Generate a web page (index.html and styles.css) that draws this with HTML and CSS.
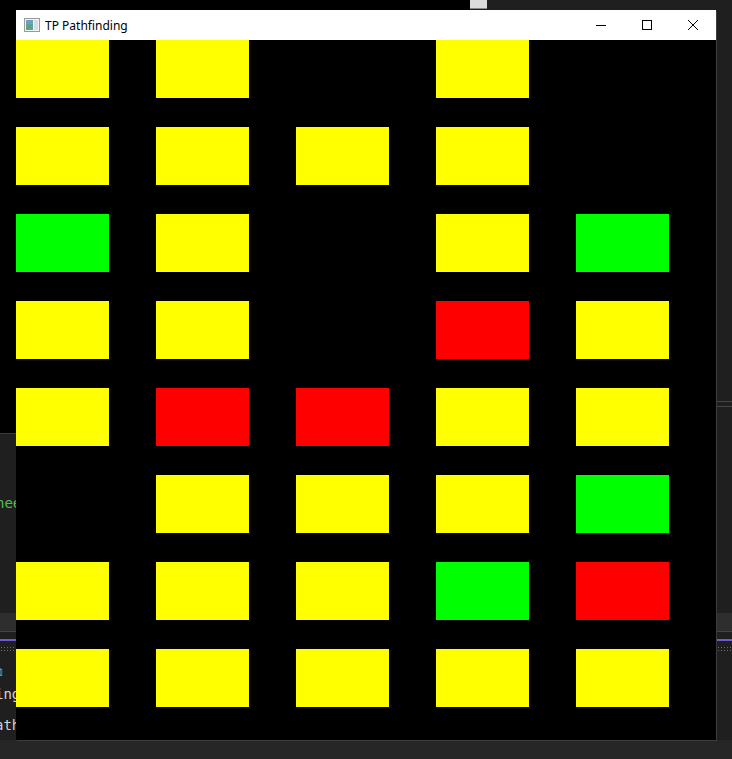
FILE: index.html
```html
<!DOCTYPE html>
<html>
<head>
<meta charset="utf-8">
<title>TP Pathfinding</title>
<link rel="stylesheet" href="styles.css">
</head>
<body>
<div class="desktop">
  <div class="bg-black"></div>
  <div class="thumb"></div>
  <div class="rline r1"></div>
  <div class="rline r2"></div>
  <div class="band"></div>
  <div class="purple"></div>
  <div class="dots"></div>
  <div class="bottom"></div>
  <span class="frag green">nee</span>
  <span class="frag ico">⧉</span>
  <span class="frag t1">ing</span>
  <span class="frag t2">ath</span>

  <div class="window">
    <div class="titlebar">
      <svg class="appicon" width="16" height="16" viewBox="0 0 16 16">
        <rect x="0.5" y="1.5" width="15" height="13" fill="#f4f4f4" stroke="#9a9a9a"/>
        <rect x="2" y="3" width="7" height="10" fill="#5aa58a"/>
        <rect x="2" y="3" width="7" height="4" fill="#6d9fc7"/>
        <rect x="10" y="3" width="4" height="10" fill="#d8dde2"/>
      </svg>
      <span class="title">TP Pathfinding</span>
      <div class="caption">
        <div class="cbtn"><svg width="10" height="10" viewBox="0 0 10 10"><line x1="0" y1="5.5" x2="10" y2="5.5" stroke="#000" stroke-width="1"/></svg></div>
        <div class="cbtn"><svg width="10" height="10" viewBox="0 0 10 10"><rect x="0.5" y="0.5" width="9" height="9" fill="none" stroke="#000" stroke-width="1"/></svg></div>
        <div class="cbtn"><svg width="10" height="10" viewBox="0 0 10 10"><path d="M0 0 L10 10 M10 0 L0 10" stroke="#000" stroke-width="1"/></svg></div>
      </div>
    </div>
    <div class="client">
      <div class="grid">
        <span class="c y"></span><span class="c y"></span><span class="c"></span><span class="c y"></span><span class="c"></span>
        <span class="c y"></span><span class="c y"></span><span class="c y"></span><span class="c y"></span><span class="c"></span>
        <span class="c g"></span><span class="c y"></span><span class="c"></span><span class="c y"></span><span class="c g"></span>
        <span class="c y"></span><span class="c y"></span><span class="c"></span><span class="c r"></span><span class="c y"></span>
        <span class="c y"></span><span class="c r"></span><span class="c r"></span><span class="c y"></span><span class="c y"></span>
        <span class="c"></span><span class="c y"></span><span class="c y"></span><span class="c y"></span><span class="c g"></span>
        <span class="c y"></span><span class="c y"></span><span class="c y"></span><span class="c g"></span><span class="c r"></span>
        <span class="c y"></span><span class="c y"></span><span class="c y"></span><span class="c y"></span><span class="c y"></span>
      </div>
    </div>
  </div>
</div>
</body>
</html>
```

FILE: styles.css
```css
html, body {
  margin: 0;
  padding: 0;
  background: #1e1e1e;
  overflow: hidden;
}
.desktop {
  position: relative;
  width: 732px;
  height: 759px;
  background: #1f1f1f;
  overflow: hidden;
  font-family: "DejaVu Sans Mono", monospace;
}
.bg-black {
  position: absolute;
  left: 0; top: 0;
  width: 470px; height: 433px;
  background: #000;
  border-bottom: 1px solid #3a3a3a;
}
.thumb {
  position: absolute;
  left: 470px; top: 0;
  width: 17px; height: 8px;
  background: #dcdcdc;
  border-bottom: 1px solid #8a8a8a;
}
.rline {
  position: absolute;
  left: 700px; width: 32px; height: 1px;
  background: #454545;
}
.r1 { top: 401px; }
.r2 { top: 406px; }
.band {
  position: absolute;
  left: 0; top: 613px;
  width: 732px; height: 18px;
  background: #2e2e2e;
  border-bottom: 1px solid #444;
}
.purple {
  position: absolute;
  left: 0; top: 639px;
  width: 732px; height: 2px;
  background: #6b5bd6;
}
.dots {
  position: absolute;
  left: 0; top: 646px;
  width: 732px; height: 5px;
  background-image: radial-gradient(circle, #6a6a6a 0.8px, transparent 1px);
  background-size: 3px 3px;
}
.bottom {
  position: absolute;
  left: 0; top: 685px;
  width: 732px; height: 74px;
  background: #1f1f1f;
}
.bottom::after {
  content: "";
  position: absolute;
  left: 0; top: 55px;
  width: 732px; height: 19px;
  background: #262626;
}
.frag {
  position: absolute;
  font-size: 14px;
  line-height: 16px;
  color: #d4d4d4;
}
.green { left: -4px; top: 495px; color: #4ec04e; }
.ico { left: -6px; top: 664px; color: #3b9cff; font-size: 12px; }
.t1 { left: -5px; top: 686px; }
.t2 { left: -5px; top: 717px; }

.window {
  position: absolute;
  left: 16px; top: 10px;
  width: 700px;
  height: 730px;
  background: #000;
  box-shadow: 1px 1px 0 #3c3c3c;
  display: flex;
  flex-direction: column;
}
.titlebar {
  height: 30px;
  flex: none;
  background: #fff;
  display: flex;
  align-items: center;
  font-family: "Noto Sans", "Open Sans", sans-serif;
}
.appicon {
  margin-left: 8px;
  margin-right: 5px;
  flex: none;
}
.title {
  font-size: 12px;
  color: #000;
  flex: 1;
  padding-top: 0px;
}
.caption {
  display: flex;
  height: 30px;
}
.cbtn {
  width: 46px;
  height: 30px;
  display: flex;
  align-items: center;
  justify-content: center;
}
.client {
  flex: 1;
  background: #000;
}
.grid {
  display: grid;
  grid-template-columns: repeat(5, 140px);
  grid-auto-rows: 87px;
}
.c {
  display: block;
  width: 93px;
  height: 58px;
}
.y { background: #ffff00; }
.g { background: #00ff00; }
.r { background: #ff0000; }
```
